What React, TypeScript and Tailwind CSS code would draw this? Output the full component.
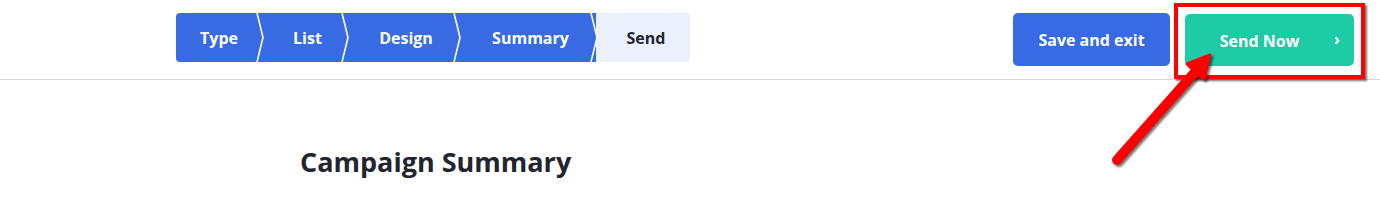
const steps = [
  { label: "Type", w: "w-[86px]", done: true },
  { label: "List", w: "w-[85px]", done: true },
  { label: "Design", w: "w-[112px]", done: true },
  { label: "Summary", w: "w-[137px]", done: true },
  { label: "Send", w: "w-[94px]", done: false },
];

function Chevron() {
  return (
    <svg
      className="absolute right-[-3px] top-0 z-10 h-full w-[10px]"
      viewBox="0 0 10 49"
      preserveAspectRatio="none"
    >
      <path d="M2 0 L8 24.5 L2 49" fill="none" stroke="#fff" strokeWidth="1.6" />
    </svg>
  );
}

export default function App() {
  return (
    <div className="relative h-[207px] w-[1380px] overflow-hidden bg-white font-['Open_Sans',sans-serif] text-[#222530]">
      <header className="flex h-[80px] items-start justify-between border-b border-[#d5d8de] pl-[176px] pr-[26px]">
        <nav className="mt-[13px] flex h-[49px] overflow-hidden rounded-[4px]">
          {steps.map((s, i) => (
            <div
              key={s.label}
              className={`relative flex items-center justify-center pt-[1px] text-[16px] font-bold ${s.w} ${
                i > 0 ? "pl-[6px]" : ""
              } ${s.done ? "bg-[#376ae3] text-white" : "bg-[#ebf1fc] text-[#222530]"}`}
            >
              {s.label}
              {s.done && <Chevron />}
            </div>
          ))}
        </nav>

        <div className="mt-[13px] flex items-start gap-[15px]">
          <button className="h-[53px] w-[157px] rounded-[5px] bg-[#376ae3] pt-[1px] text-[16px] font-bold text-white">
            Save and exit
          </button>
          <div className="relative mt-[1px]">
            <button className="relative flex h-[52px] w-[169px] items-center justify-center rounded-[5px] bg-[#1ecba5] pr-[20px] pt-[1px] text-[16px] font-bold text-white">
              Send Now
              <span className="absolute right-[14px] top-[13px] text-[16px] font-bold">›</span>
            </button>
            <div className="pointer-events-none absolute -bottom-[13px] -left-[11px] -right-[11px] -top-[11px] border-[4px] border-[#ff0000] shadow-[2px_2px_2px_rgba(0,0,0,0.55)]" />
          </div>
        </div>
      </header>

      <main className="pl-[300px] pt-[66px]">
        <h1 className="text-[27px] font-bold leading-[32px] text-[#222530]">Campaign Summary</h1>
      </main>

      <svg
        className="pointer-events-none absolute left-0 top-0 drop-shadow-[2px_2px_1px_rgba(0,0,0,0.55)]"
        width="1380"
        height="207"
      >
        <line x1="1117" y1="160" x2="1196" y2="71" stroke="#ff0000" strokeWidth="10" strokeLinecap="round" />
        <polygon points="1210,55 1187,64 1204,79" fill="#ff0000" stroke="#ff0000" strokeWidth="3" strokeLinejoin="round" />
      </svg>
    </div>
  );
}
